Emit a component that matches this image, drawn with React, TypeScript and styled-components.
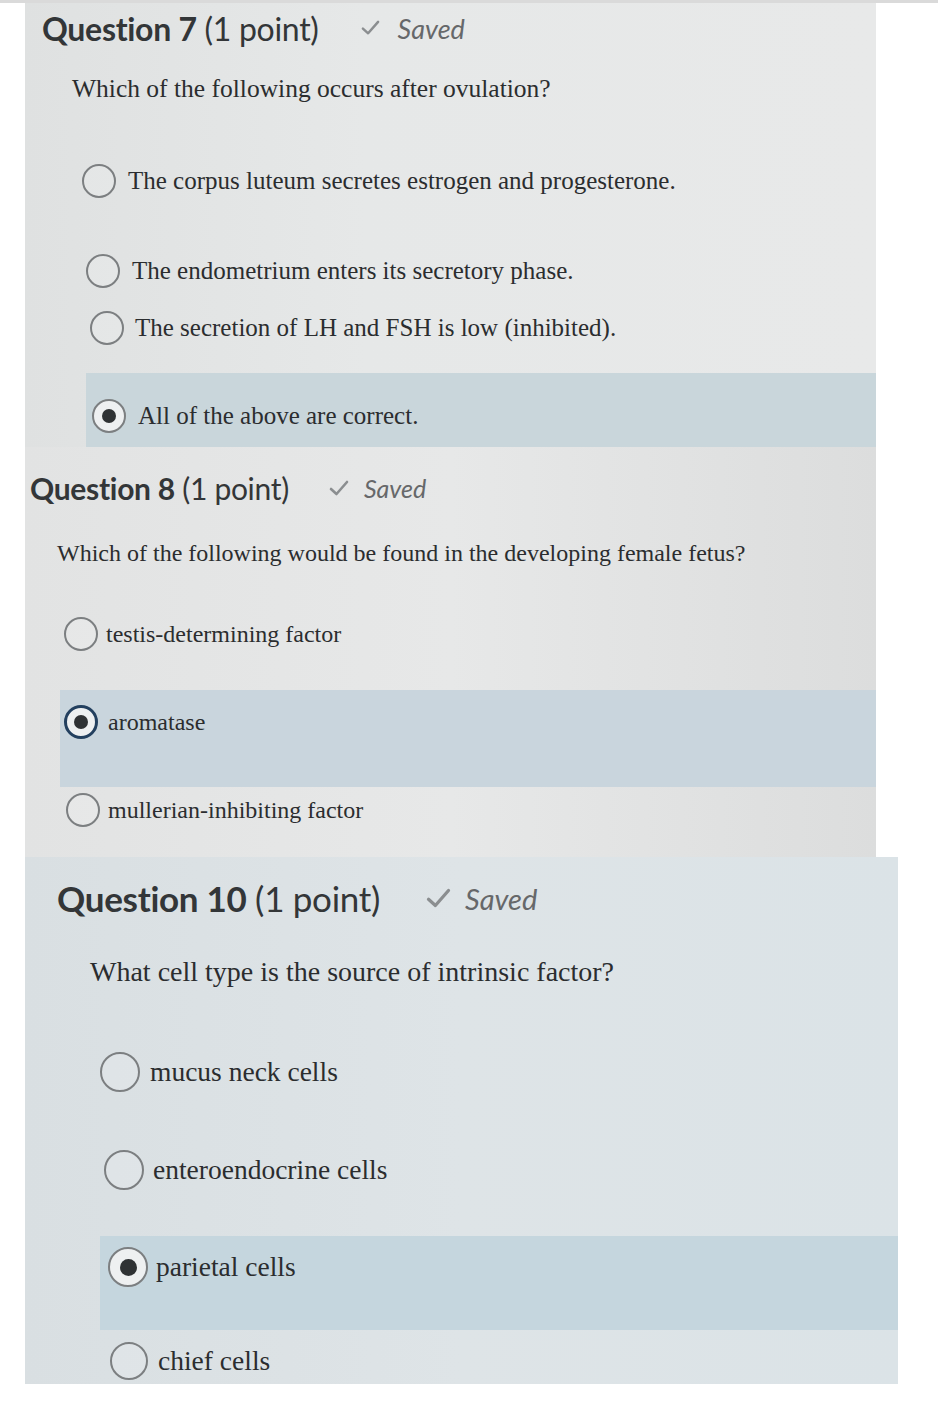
import React from "react";
import styled, { createGlobalStyle } from "styled-components";

const Global = createGlobalStyle`
  html, body { margin: 0; padding: 0; background: #ffffff; }
  body { font-family: "Liberation Serif", serif; }
`;

const Page = styled.div`
  width: 938px;
  min-height: 1412px;
  background: #ffffff;
  display: flex;
  flex-direction: column;
`;

const TopRule = styled.div`
  height: 3px;
  background: #dadada;
`;

const Panel = styled.section<{ $x: number; $w: number; $h: number; $bg: string }>`
  margin-left: ${(p) => p.$x}px;
  width: ${(p) => p.$w}px;
  height: ${(p) => p.$h}px;
  background: ${(p) => p.$bg};
  display: flex;
  flex-direction: column;
  overflow: hidden;
`;

const Header = styled.div<{ $pt: number; $pl: number; $gap: number }>`
  display: flex;
  align-items: center;
  height: 34px;
  margin-top: ${(p) => p.$pt}px;
  padding-left: ${(p) => p.$pl}px;
  gap: ${(p) => p.$gap}px;
`;

const Title = styled.h2<{ $size: number }>`
  margin: 0;
  font-family: Lato, "Open Sans", sans-serif;
  font-size: ${(p) => p.$size}px;
  font-weight: 400;
  color: #333638;
  letter-spacing: -0.3px;
  white-space: nowrap;
  b { font-weight: 700; }
`;

const Saved = styled.span<{ $size: number; $gap: number }>`
  display: inline-flex;
  align-items: center;
  gap: ${(p) => p.$gap}px;
  font-family: Lato, "Open Sans", sans-serif;
  font-style: italic;
  font-size: ${(p) => p.$size}px;
  color: #66686a;
  svg { flex: none; }
`;

const Prompt = styled.p<{ $mt: number; $pl: number; $size: number }>`
  margin: ${(p) => p.$mt}px 0 0 0;
  padding-left: ${(p) => p.$pl}px;
  height: 30px;
  line-height: 30px;
  font-family: "Liberation Serif", serif;
  font-size: ${(p) => p.$size}px;
  color: #2b2d2f;
  white-space: nowrap;
`;

const Option = styled.label<{
  $mt: number;
  $ml: number;
  $pl: number;
  $pt: number;
  $h: number;
  $gap: number;
  $selected?: boolean;
  $band?: string;
}>`
  display: flex;
  align-items: flex-start;
  margin-top: ${(p) => p.$mt}px;
  margin-left: ${(p) => p.$ml}px;
  padding-left: ${(p) => p.$pl}px;
  padding-top: ${(p) => p.$pt}px;
  height: ${(p) => p.$h}px;
  box-sizing: border-box;
  gap: ${(p) => p.$gap}px;
  background: ${(p) => (p.$selected ? p.$band || "#c9d6db" : "transparent")};
`;

const Radio = styled.span<{ $d: number; $checked?: boolean; $focus?: boolean }>`
  flex: none;
  width: ${(p) => p.$d}px;
  height: ${(p) => p.$d}px;
  box-sizing: border-box;
  border-radius: 50%;
  border: ${(p) => (p.$focus ? "3px solid #23405f" : "2px solid #7c7f81")};
  background: ${(p) => (p.$checked ? "#eef0f1" : "rgba(255,255,255,0.15)")};
  display: flex;
  align-items: center;
  justify-content: center;
  &::after {
    content: "";
    display: ${(p) => (p.$checked ? "block" : "none")};
    width: ${(p) => Math.round(p.$d * 0.42)}px;
    height: ${(p) => Math.round(p.$d * 0.42)}px;
    border-radius: 50%;
    background: #2f3234;
  }
`;

const OptionText = styled.span<{ $size: number; $d: number }>`
  font-family: "Liberation Serif", serif;
  font-size: ${(p) => p.$size}px;
  line-height: ${(p) => p.$d}px;
  color: #2b2d2f;
  white-space: nowrap;
`;

const Check = ({ w }: { w: number }) => (
  <svg width={w} height={w * 0.8} viewBox="0 0 20 16" fill="none">
    <path d="M2 9 L7.5 14 L18 2" stroke="#8b8e90" strokeWidth="2.6" strokeLinecap="round" strokeLinejoin="round" />
  </svg>
);

type Opt = {
  text: string;
  mt: number;
  ml: number;
  pl?: number;
  pt?: number;
  h: number;
  d: number;
  gap: number;
  checked?: boolean;
  focus?: boolean;
};

type Q = {
  num: number;
  panel: { x: number; w: number; h: number; bg: string };
  header: { pt: number; pl: number; gap: number; size: number; saved: number; check: number; savedGap: number };
  prompt: { text: string; mt: number; pl: number; size: number };
  optSize: number;
  band: string;
  options: Opt[];
};

const questions: Q[] = [
  {
    num: 7,
    panel: { x: 25, w: 851, h: 444, bg: "linear-gradient(90deg, #dfe1e1 0%, #e6e8e8 40%, #e8e9e9 100%)" },
    header: { pt: 8, pl: 17, gap: 42, size: 32, saved: 27, check: 19, savedGap: 18 },
    prompt: { text: "Which of the following occurs after ovulation?", mt: 29, pl: 47, size: 25.5 },
    optSize: 25,
    band: "#c9d6db",
    options: [
      { text: "The corpus luteum secretes estrogen and progesterone.", mt: 60, ml: 57, h: 34, d: 34, gap: 12 },
      { text: "The endometrium enters its secretory phase.", mt: 56, ml: 61, h: 34, d: 34, gap: 12 },
      { text: "The secretion of LH and FSH is low (inhibited).", mt: 23, ml: 65, h: 34, d: 34, gap: 11 },
      { text: "All of the above are correct.", mt: 28, ml: 61, pl: 6, pt: 26, h: 74, d: 34, gap: 12, checked: true },
    ],
  },
  {
    num: 8,
    panel: { x: 25, w: 851, h: 410, bg: "linear-gradient(90deg, #e2e3e3 0%, #e7e8e8 50%, #dcdddd 100%)" },
    header: { pt: 24, pl: 5, gap: 40, size: 30, saved: 25, check: 20, savedGap: 15 },
    prompt: { text: "Which of the following would be found in the developing female fetus?", mt: 33, pl: 32, size: 24 },
    optSize: 24,
    band: "#c9d5dd",
    options: [
      { text: "testis-determining factor", mt: 49, ml: 39, h: 34, d: 34, gap: 8 },
      { text: "aromatase", mt: 39, ml: 35, pl: 4, pt: 15, h: 97, d: 34, gap: 10, checked: true, focus: true },
      { text: "mullerian-inhibiting factor", mt: 6, ml: 41, h: 34, d: 34, gap: 8 },
    ],
  },
  {
    num: 10,
    panel: { x: 25, w: 873, h: 527, bg: "linear-gradient(90deg, #d9dfe2 0%, #dee4e7 50%, #dbe3e7 100%)" },
    header: { pt: 24, pl: 32, gap: 46, size: 35, saved: 29, check: 25, savedGap: 14 },
    prompt: { text: "What cell type is the source of intrinsic factor?", mt: 42, pl: 65, size: 28 },
    optSize: 27.5,
    band: "#c5d6de",
    options: [
      { text: "mucus neck cells", mt: 65, ml: 75, h: 40, d: 40, gap: 10 },
      { text: "enteroendocrine cells", mt: 58, ml: 79, h: 40, d: 40, gap: 9 },
      { text: "parietal cells", mt: 46, ml: 75, pl: 8, pt: 11, h: 94, d: 40, gap: 8, checked: true },
      { text: "chief cells", mt: 12, ml: 85, h: 38, d: 38, gap: 10 },
    ],
  },
];

const Question = ({ q }: { q: Q }) => (
  <Panel $x={q.panel.x} $w={q.panel.w} $h={q.panel.h} $bg={q.panel.bg}>
    <Header $pt={q.header.pt} $pl={q.header.pl} $gap={q.header.gap}>
      <Title $size={q.header.size}>
        <b>Question {q.num}</b> (1 point)
      </Title>
      <Saved $size={q.header.saved} $gap={q.header.savedGap}>
        <Check w={q.header.check} />
        Saved
      </Saved>
    </Header>
    <Prompt $mt={q.prompt.mt} $pl={q.prompt.pl} $size={q.prompt.size}>
      {q.prompt.text}
    </Prompt>
    {q.options.map((o) => (
      <Option
        key={o.text}
        $mt={o.mt}
        $ml={o.ml}
        $pl={o.pl ?? 0}
        $pt={o.pt ?? 0}
        $h={o.h}
        $gap={o.gap}
        $selected={o.checked}
        $band={q.band}
      >
        <Radio $d={o.d} $checked={o.checked} $focus={o.focus} />
        <OptionText $size={q.optSize} $d={o.d}>
          {o.text}
        </OptionText>
      </Option>
    ))}
  </Panel>
);

export default function App() {
  return (
    <Page>
      <Global />
      <TopRule />
      {questions.map((q) => (
        <Question key={q.num} q={q} />
      ))}
    </Page>
  );
}
